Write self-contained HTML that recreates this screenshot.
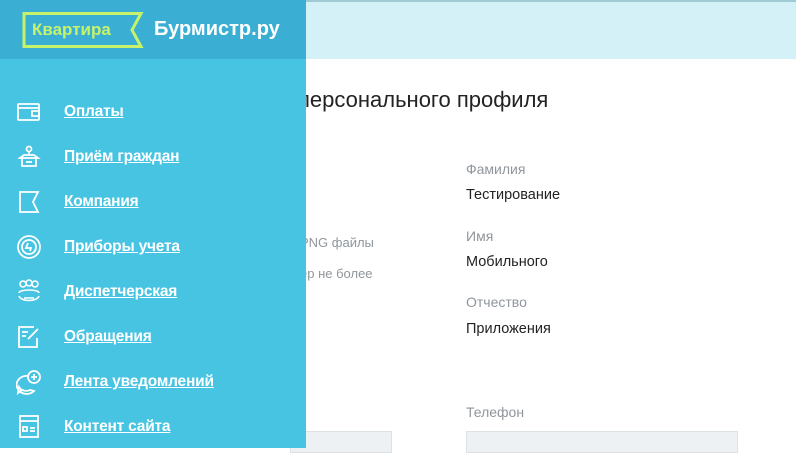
<!DOCTYPE html><html><head><meta charset="utf-8"><style>
body{margin:0;width:796px;height:448px;overflow:hidden;background:#fff;font-family:"Liberation Sans","Noto Sans CJK SC",sans-serif;position:relative}
.top{position:absolute;left:0;top:0;width:796px;height:59px;background:#d3f1f6;border-top:2px solid #9fc9d3;box-sizing:border-box}
.side{position:absolute;left:0;top:0;width:306px;height:448px;background:#48c4e3}
.sh{position:absolute;left:0;top:0;width:306px;height:59px;background:#3aaed3}
.logo1{position:absolute;left:32px;top:20px;color:#c6f36a;font-weight:bold;font-size:17px}
.logo2{position:absolute;left:154px;top:18px;color:#fff;font-weight:bold;font-size:20px}
.m{position:absolute;left:64px;color:#fff;font-weight:bold;font-size:15.5px;text-decoration:underline;letter-spacing:-.2px}
.ic{position:absolute;left:16px;width:26px;height:26px}
.t{position:absolute;color:#222;font-size:14.5px}
.g{position:absolute;color:#8f969c;font-size:14px}
.inp{position:absolute;top:431px;height:20px;background:#eef1f3;border:1px solid #dde2e5}
</style></head><body>
<div class="top"></div>
<div class="t" style="left:298px;top:87px;font-size:22px">персонального профиля</div>
<div class="g" style="left:300px;top:235px;font-size:13px">PNG файлы</div>
<div class="g" style="left:300px;top:266px;font-size:13px">ер не более</div>
<div class="g" style="left:466px;top:161px">Фамилия</div>
<div class="t" style="left:466px;top:187px">Тестирование</div>
<div class="g" style="left:466px;top:228px">Имя</div>
<div class="t" style="left:466px;top:254px">Мобильного</div>
<div class="g" style="left:466px;top:294px">Отчество</div>
<div class="t" style="left:466px;top:321px">Приложения</div>
<div class="g" style="left:466px;top:404px">Телефон</div>
<div class="inp" style="left:290px;width:100px"></div>
<div class="inp" style="left:466px;width:270px"></div>
<div class="side">
<div class="sh">
<svg style="position:absolute;left:0;top:0" width="160" height="59"><path d="M24 13.5H141L132 30L141 46.5H24Z" fill="none" stroke="#c6f36a" stroke-width="3"/></svg>
<div class="logo1">Квартира</div><div class="logo2">Бурмистр.ру</div></div>
<svg class="ic" style="top:99px" viewBox="0 0 26 26" fill="none" stroke="#fff" stroke-width="1.8"><rect x="2" y="5" width="21" height="16" rx="1"/><path d="M2 9h21M16 12h7v5h-7z"/></svg>
<svg class="ic" style="top:144px" viewBox="0 0 26 26" fill="none" stroke="#fff" stroke-width="1.8"><circle cx="13" cy="5" r="2.5"/><path d="M13 8v3M4 14l4-3h10l4 3zM6 14v8h14v-8M10 18h6"/></svg>
<svg class="ic" style="top:189px" viewBox="0 0 26 26" fill="none" stroke="#fff" stroke-width="1.8"><path d="M4 3v20h18l-5-10 5-10z"/></svg>
<svg class="ic" style="top:234px" viewBox="0 0 26 26" fill="none" stroke="#fff" stroke-width="1.8"><circle cx="13" cy="13" r="11"/><circle cx="13" cy="13" r="7"/><path d="M12 9l-2 5h5l-1 3"/></svg>
<svg class="ic" style="top:279px" viewBox="0 0 26 26" fill="none" stroke="#fff" stroke-width="1.6"><circle cx="7" cy="5" r="3"/><circle cx="13" cy="4" r="3"/><circle cx="19" cy="5" r="3"/><path d="M3 14c0-4 20-4 20 0M3 17c2 6 18 6 20 0M8 19h10"/></svg>
<svg class="ic" style="top:324px" viewBox="0 0 26 26" fill="none" stroke="#fff" stroke-width="1.8"><path d="M18 3H3v20h18v-9M6 8h6M6 12h4M12 15l10-10"/></svg>
<svg class="ic" style="top:369px" viewBox="0 0 26 26" fill="none" stroke="#fff" stroke-width="1.8"><path d="M12 7a10 9 0 1 0 6 15l-4-1a8 7 0 0 1-11-3l-1 6 4-3"/><circle cx="18" cy="8" r="6"/><path d="M18 5v6M15 8h6"/></svg>
<svg class="ic" style="top:414px" viewBox="0 0 26 26" fill="none" stroke="#fff" stroke-width="1.8"><rect x="4" y="2" width="18" height="21"/><path d="M4 7h18M7 13h4v4H7zM14 14h5M14 17h5"/></svg>
<div class="m" style="top:103px">Оплаты</div>
<div class="m" style="top:148px">Приём граждан</div>
<div class="m" style="top:193px">Компания</div>
<div class="m" style="top:238px">Приборы учета</div>
<div class="m" style="top:283px">Диспетчерская</div>
<div class="m" style="top:328px">Обращения</div>
<div class="m" style="top:373px">Лента уведомлений</div>
<div class="m" style="top:418px">Контент сайта</div>
</div>
</body></html>
